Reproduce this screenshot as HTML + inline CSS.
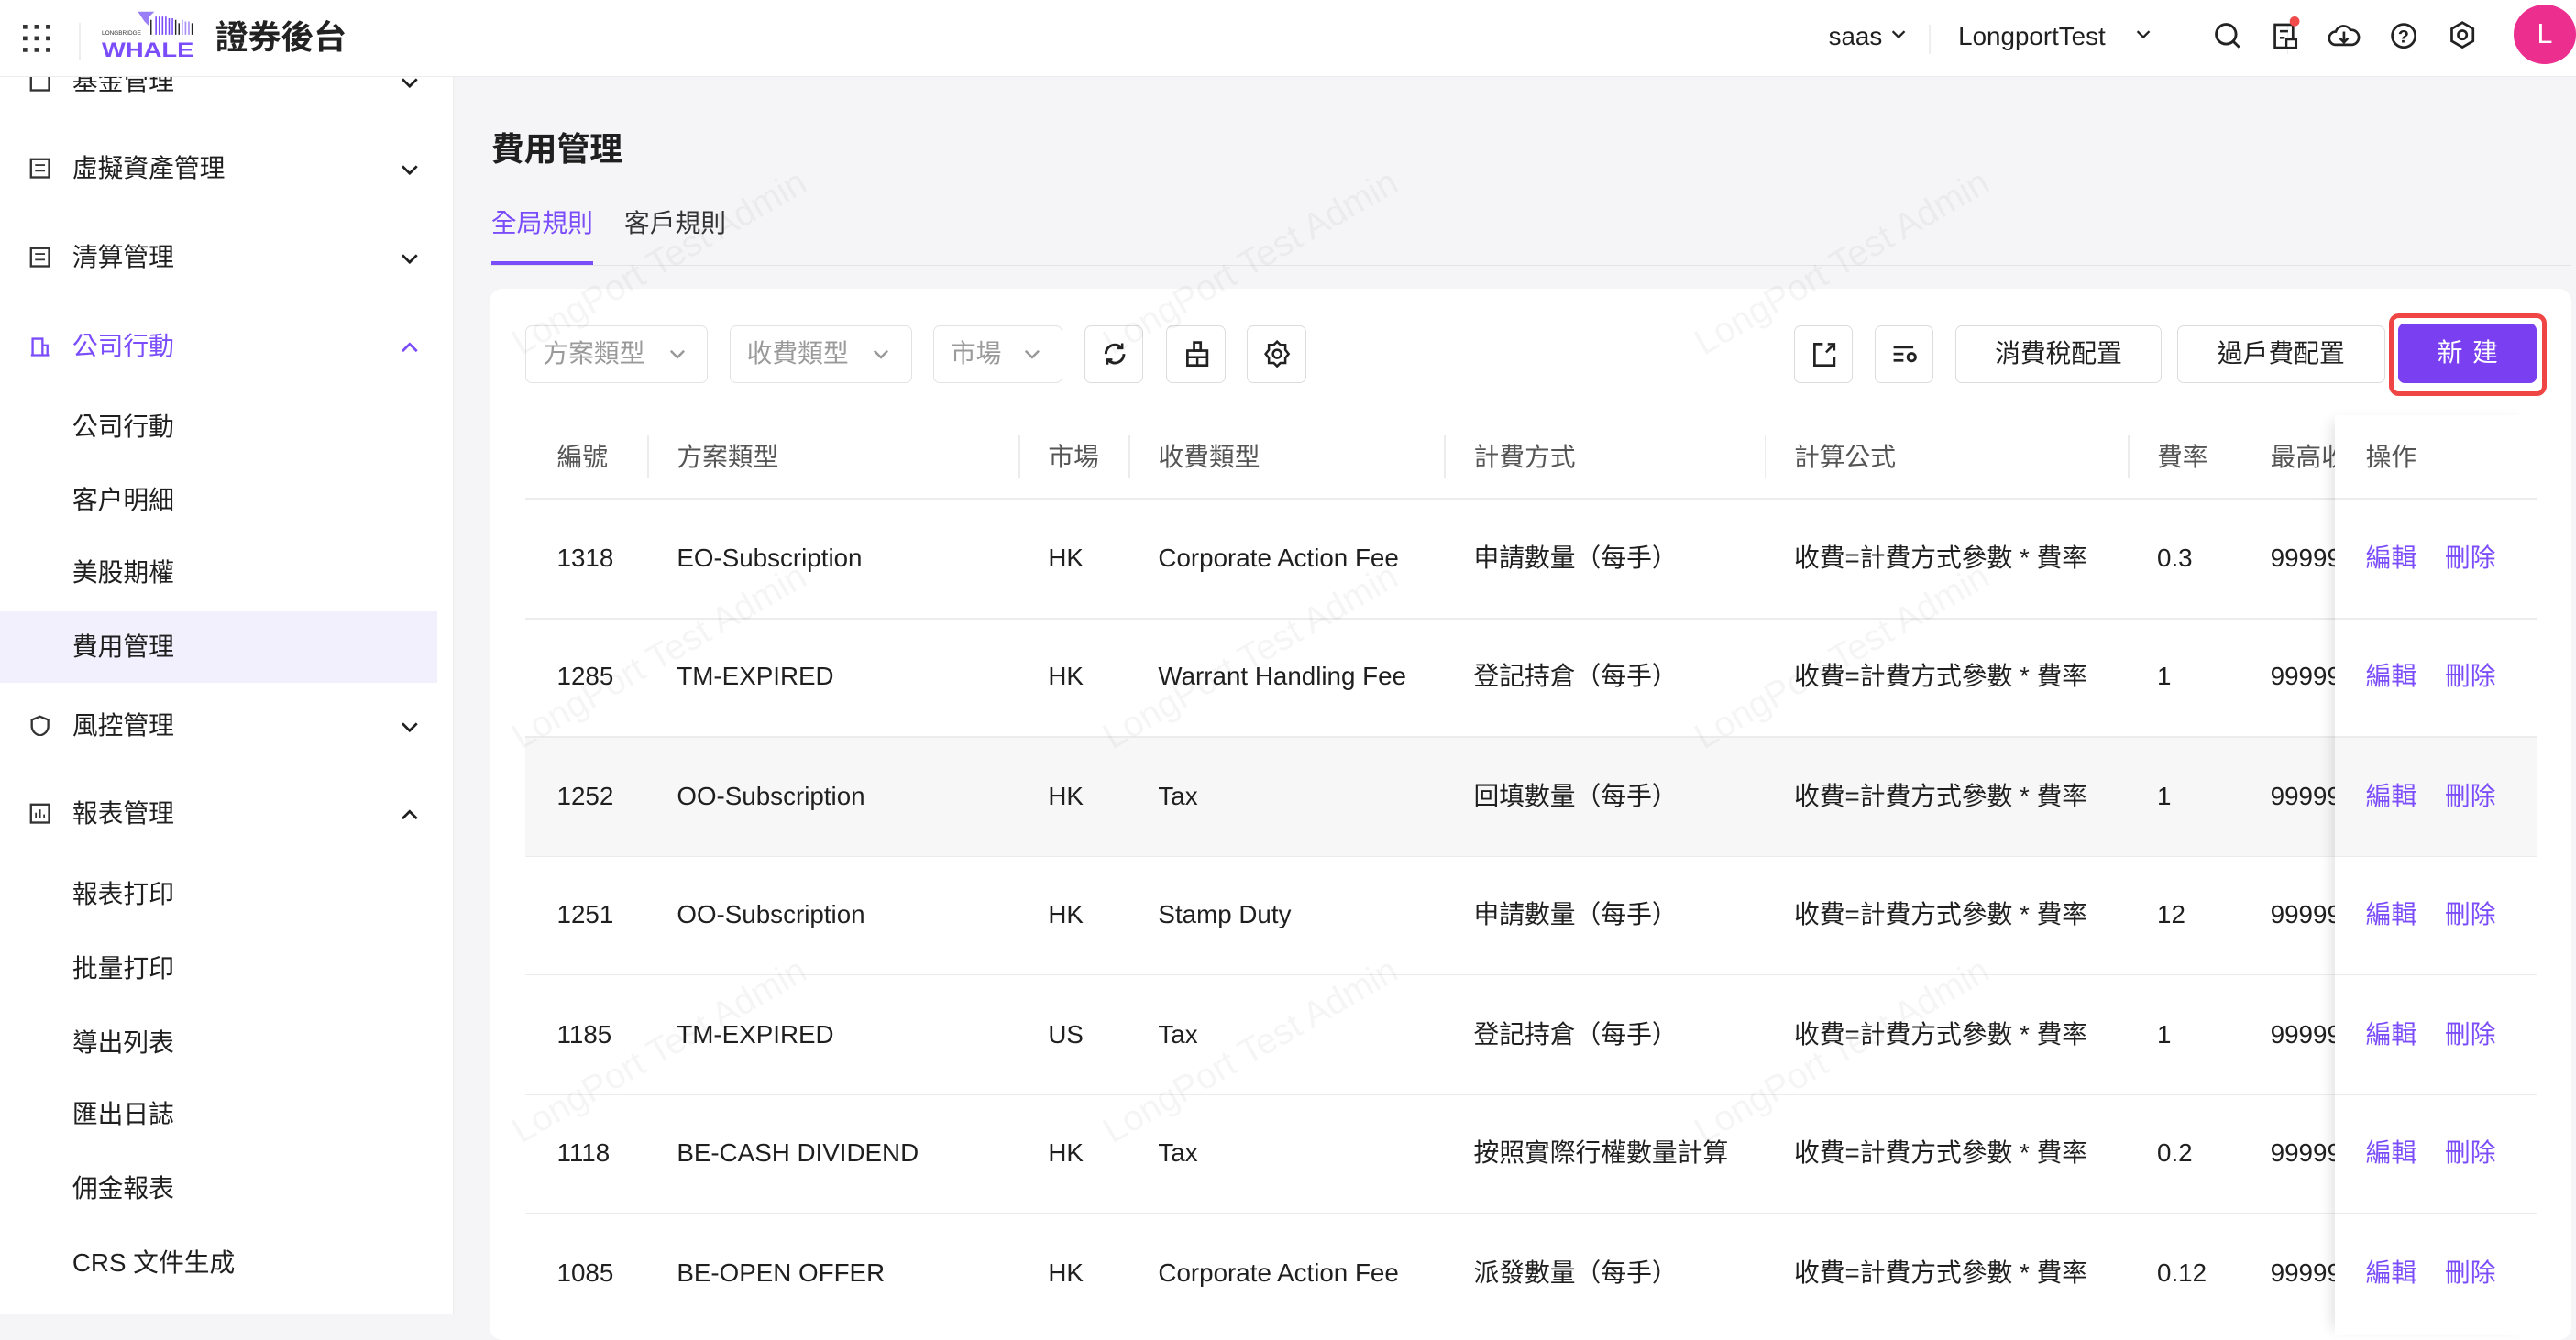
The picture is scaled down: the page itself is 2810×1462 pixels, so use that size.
<!DOCTYPE html>
<html><head><meta charset="utf-8">
<style>
html{zoom:1.7921}
*{box-sizing:border-box;margin:0;padding:0}
body{width:1568px;height:800px;overflow:hidden;background:#f5f5f7;font-family:"Liberation Sans","Noto Sans CJK TC",sans-serif;color:#1f1f1f;position:relative;font-size:15px;line-height:20px}
.abs{position:absolute}
.hdr{left:0;top:0;width:1568px;height:47px;background:#fff;border-bottom:1px solid #ececec;z-index:5}
.side{left:0;top:47px;width:276px;height:753px;background:#fff;border-right:1px solid #ececec}
.mi{position:absolute;left:0;width:266px;height:44px;line-height:44px;font-size:15.5px}
.mi .t{position:absolute;left:44px}
.mi .ic{position:absolute;left:18px;top:15px;width:13px;height:13px}
.mi .ch{position:absolute;left:244px;top:19px}
.sel{background:#f3f0fd}
.card{left:298px;top:176px;width:1267px;height:640px;background:#fff;border-radius:8px}
.sl{position:absolute;top:198px;height:35px;border:1px solid #e3e3e3;border-radius:4px;color:#9a9a9a;font-size:15.5px;line-height:33px;padding-left:10px;background:#fff}
.sl svg{position:absolute;right:13px;top:14px}
.ib{position:absolute;top:198px;width:36px;height:35px;border:1px solid #dcdcdc;border-radius:4px;background:#fff}
.ib svg{position:absolute;left:9px;top:8px}
.bt{position:absolute;top:198px;height:35px;border:1px solid #dcdcdc;border-radius:4px;background:#fff;text-align:center;line-height:33px;font-size:15.5px}
.th{position:absolute;top:253px;height:51px;line-height:51px;color:#555;font-size:15.5px}
.td{position:absolute;font-size:15.5px;color:#1f1f1f;white-space:nowrap;line-height:20px;height:20px}
.sep{position:absolute;top:265px;width:1px;height:26px;background:#ececec}
.rl{position:absolute;left:320px;width:1224px;height:1px;background:#ececec}
.wm{position:absolute;color:rgba(0,0,0,0.04);font-size:22px;transform:rotate(-30deg);white-space:nowrap;z-index:4;pointer-events:none}
a{color:#7b4dfa;text-decoration:none}
</style></head><body>
<svg width="0" height="0" style="position:absolute"><defs>
<symbol id="dn" viewBox="0 0 10 6"><path d="M1 1l4 4 4-4" fill="none" stroke="currentColor" stroke-width="1.4"/></symbol>
<symbol id="up" viewBox="0 0 10 6"><path d="M1 5l4-4 4 4" fill="none" stroke="currentColor" stroke-width="1.4"/></symbol>
</defs></svg>
<div class="abs hdr">
  <svg class="abs" style="left:14px;top:15px" width="18" height="18"><g fill="#333"><rect x="0" y="0" width="2.6" height="2.6"/><rect x="7" y="0" width="2.6" height="2.6"/><rect x="14" y="0" width="2.6" height="2.6"/><rect x="0" y="7" width="2.6" height="2.6"/><rect x="7" y="7" width="2.6" height="2.6"/><rect x="14" y="7" width="2.6" height="2.6"/><rect x="0" y="14" width="2.6" height="2.6"/><rect x="7" y="14" width="2.6" height="2.6"/><rect x="14" y="14" width="2.6" height="2.6"/></g></svg>
  <div class="abs" style="left:48px;top:14px;width:1px;height:22px;background:#eee"></div>
  <svg class="abs" style="left:62px;top:6px" width="58" height="30">
    <path d="M22 1h10l-3 3v6l-3-3z" fill="#9a7ef5"/>
    <g stroke="#7b4dfa" stroke-width="0.9"><line x1="33" y1="4" x2="33" y2="15"/><line x1="35" y1="4" x2="35" y2="15"/><line x1="37" y1="4" x2="37" y2="15"/><line x1="39" y1="4" x2="39" y2="15"/><line x1="41" y1="5" x2="41" y2="15"/><line x1="43" y1="5" x2="43" y2="15"/></g>
    <g stroke="#222" stroke-width="0.8"><line x1="30" y1="6" x2="30" y2="15"/><line x1="45" y1="6" x2="45" y2="15"/><line x1="47" y1="8" x2="47" y2="15"/><line x1="55" y1="8" x2="55" y2="15"/></g>
    <g stroke="#a98cf8" stroke-width="0.9"><line x1="49" y1="6" x2="49" y2="15"/><line x1="51" y1="7" x2="51" y2="15"/><line x1="53" y1="7" x2="53" y2="15"/></g>
    <text x="0" y="15" font-size="3.6" fill="#333" font-family="Liberation Sans">LONGBRIDGE</text>
    <text x="0" y="28.5" font-size="12.5" font-weight="bold" fill="#7b4dfa" font-family="Liberation Sans" textLength="56" lengthAdjust="spacingAndGlyphs">WHALE</text>
  </svg>
  <div class="abs" style="left:131px;top:10px;font-size:20px;font-weight:bold;color:#222;line-height:26px">證券後台</div>
  <div class="abs" style="left:1113px;top:12px;font-size:15.5px">saas</div>
  <svg class="abs" style="left:1151px;top:18px;color:#222" width="9" height="6"><use href="#dn"/></svg>
  <div class="abs" style="left:1174px;top:15px;width:1px;height:18px;background:#eee"></div>
  <div class="abs" style="left:1192px;top:12px;font-size:15.5px">LongportTest</div>
  <svg class="abs" style="left:1300px;top:18px;color:#222" width="9" height="6"><use href="#dn"/></svg>
  <div class="abs" style="left:1392px;top:15px;width:1px;height:18px;background:#eee"></div>
  <svg class="abs" style="left:1347px;top:13px" width="20" height="20"><circle cx="8" cy="8" r="6" fill="none" stroke="#222" stroke-width="1.6"/><line x1="12.5" y1="12.5" x2="16" y2="16" stroke="#222" stroke-width="1.6"/></svg>
  <svg class="abs" style="left:1383px;top:10px" width="20" height="22"><rect x="2" y="5" width="11" height="14" fill="none" stroke="#222" stroke-width="1.5"/><line x1="5" y1="9" x2="10" y2="9" stroke="#222" stroke-width="1.4"/><line x1="5" y1="13" x2="8" y2="13" stroke="#222" stroke-width="1.4"/><rect x="9" y="14" width="6" height="5" fill="#fff" stroke="#222" stroke-width="1.3"/><circle cx="14" cy="3" r="3" fill="#f04a4a"/></svg>
  <svg class="abs" style="left:1417px;top:12px" width="20" height="20"><path d="M5 15a4 4 0 0 1 0-8 5 5 0 0 1 9-1 4.5 4.5 0 0 1 1 9z" fill="none" stroke="#222" stroke-width="1.5"/><line x1="10" y1="7" x2="10" y2="13" stroke="#222" stroke-width="1.5"/><path d="M7.5 11l2.5 2.5 2.5-2.5" fill="none" stroke="#222" stroke-width="1.5"/></svg>
  <svg class="abs" style="left:1454px;top:13px" width="20" height="20"><circle cx="9" cy="9" r="7" fill="none" stroke="#222" stroke-width="1.5"/><text x="5.5" y="13" font-size="11" font-weight="bold" fill="#222" font-family="Liberation Sans">?</text></svg>
  <svg class="abs" style="left:1490px;top:12px" width="20" height="20"><path d="M9 1.5l6.5 3.75v7.5L9 16.5l-6.5-3.75v-7.5z" fill="none" stroke="#222" stroke-width="1.5"/><circle cx="9" cy="9" r="2.6" fill="none" stroke="#222" stroke-width="1.5"/></svg>
  <div class="abs" style="left:1530px;top:3px;width:38px;height:36px;border-radius:50%;background:#ec2f8f;color:#fff;font-size:17px;text-align:center;line-height:36px">L</div>
</div>

<div class="abs side">
  <div class="mi" style="top:-19px"><svg class="ic" viewBox="0 0 13 13"><rect x="1" y="1" width="11" height="11" fill="none" stroke="#333" stroke-width="1.3"/></svg><span class="t">基金管理</span><svg class="ch" width="11" height="7"><use href="#dn"/></svg></div>
  <div class="mi" style="top:34px"><svg class="ic" viewBox="0 0 13 13"><rect x="1" y="1" width="11" height="11" fill="none" stroke="#333" stroke-width="1.3"/><line x1="3.5" y1="4.5" x2="9.5" y2="4.5" stroke="#333"/><line x1="3.5" y1="8" x2="9.5" y2="8" stroke="#333"/></svg><span class="t">虛擬資產管理</span><svg class="ch" width="11" height="7"><use href="#dn"/></svg></div>
  <div class="mi" style="top:88px"><svg class="ic" viewBox="0 0 13 13"><rect x="1" y="1" width="11" height="11" fill="none" stroke="#333" stroke-width="1.3"/><line x1="3.5" y1="4.5" x2="9.5" y2="4.5" stroke="#333"/><line x1="3.5" y1="8" x2="9.5" y2="8" stroke="#333"/></svg><span class="t">清算管理</span><svg class="ch" width="11" height="7"><use href="#dn"/></svg></div>
  <div class="mi" style="top:142px;color:#7b4dfa"><svg class="ic" viewBox="0 0 13 13"><path d="M1 12h11M2 12V2h6v10M8 6h3v6" fill="none" stroke="#7b4dfa" stroke-width="1.3"/></svg><span class="t">公司行動</span><svg class="ch" width="11" height="7"><use href="#up"/></svg></div>
  <div class="mi" style="top:191px"><span class="t">公司行動</span></div>
  <div class="mi" style="top:236px"><span class="t">客户明細</span></div>
  <div class="mi" style="top:280px"><span class="t">美股期權</span></div>
  <div class="mi sel" style="top:325px"><span class="t">費用管理</span></div>
  <div class="mi" style="top:373px"><svg class="ic" viewBox="0 0 13 13"><path d="M6.5 1l5 2v4c0 3-2.5 5-5 5.5C4 12 1.5 10 1.5 7V3z" fill="none" stroke="#333" stroke-width="1.3"/></svg><span class="t">風控管理</span><svg class="ch" width="11" height="7"><use href="#dn"/></svg></div>
  <div class="mi" style="top:427px"><svg class="ic" viewBox="0 0 13 13"><rect x="1" y="1" width="11" height="11" fill="none" stroke="#333" stroke-width="1.3"/><line x1="4" y1="9" x2="4" y2="6" stroke="#333"/><line x1="6.5" y1="9" x2="6.5" y2="4" stroke="#333"/><line x1="9" y1="9" x2="9" y2="7" stroke="#333"/></svg><span class="t">報表管理</span><svg class="ch" width="11" height="7"><use href="#up"/></svg></div>
  <div class="mi" style="top:476px"><span class="t">報表打印</span></div>
  <div class="mi" style="top:521px"><span class="t">批量打印</span></div>
  <div class="mi" style="top:566px"><span class="t">導出列表</span></div>
  <div class="mi" style="top:610px"><span class="t">匯出日誌</span></div>
  <div class="mi" style="top:655px"><span class="t">佣金報表</span></div>
  <div class="mi" style="top:700px"><span class="t">CRS 文件生成</span></div>
</div>

<div class="abs" style="left:299px;top:78px;font-size:20px;font-weight:bold;line-height:26px">費用管理</div>
<div class="abs" style="left:299px;top:126px;font-size:15.5px;color:#7b4dfa">全局規則</div>
<div class="abs" style="left:380px;top:126px;font-size:15.5px;color:#333">客戶規則</div>
<div class="abs" style="left:298px;top:161px;width:1267px;height:1px;background:#e3e3e3"></div>
<div class="abs" style="left:299px;top:159px;width:62px;height:2px;background:#7b4dfa"></div>

<div class="abs card"></div>
<div class="sl" style="left:320px;width:111px">方案類型<svg width="10" height="6" style="color:#999"><use href="#dn"/></svg></div>
<div class="sl" style="left:444px;width:111px">收費類型<svg width="10" height="6" style="color:#999"><use href="#dn"/></svg></div>
<div class="sl" style="left:568px;width:79px">市場<svg width="10" height="6" style="color:#999"><use href="#dn"/></svg></div>
<div class="ib" style="left:660px"><svg width="18" height="18"><path d="M3.5 9a5.5 5.5 0 0 1 9.5-3.8M14.5 9a5.5 5.5 0 0 1-9.5 3.8" fill="none" stroke="#222" stroke-width="1.6"/><path d="M13.5 2.5v3h-3M4.5 15.5v-3h3" fill="none" stroke="#222" stroke-width="1.4"/></svg></div>
<div class="ib" style="left:710px"><svg width="18" height="18"><rect x="3" y="7" width="12" height="9" fill="none" stroke="#222" stroke-width="1.5"/><rect x="7" y="2" width="4" height="5" fill="none" stroke="#222" stroke-width="1.5"/><line x1="3" y1="11" x2="15" y2="11" stroke="#222" stroke-width="1.4"/><line x1="9" y1="11" x2="9" y2="16" stroke="#222" stroke-width="1.4"/></svg></div>
<div class="ib" style="left:759px"><svg width="18" height="18"><path d="M9 1.5l2 2h3v3l2 2.5-2 2.5v3h-3l-2 2-2-2H4v-3L2 9l2-2.5v-3h3z" fill="none" stroke="#222" stroke-width="1.4"/><circle cx="9" cy="9" r="2.5" fill="none" stroke="#222" stroke-width="1.4"/></svg></div>
<div class="ib" style="left:1092px"><svg width="18" height="18"><path d="M8 3H3v13h12v-5" fill="none" stroke="#222" stroke-width="1.5"/><path d="M10 8l5-5M11 3h4v4" fill="none" stroke="#222" stroke-width="1.4"/></svg></div>
<div class="ib" style="left:1141px"><svg width="18" height="18"><line x1="2" y1="5" x2="14" y2="5" stroke="#222" stroke-width="1.5"/><line x1="2" y1="9" x2="8" y2="9" stroke="#222" stroke-width="1.5"/><line x1="2" y1="13" x2="8" y2="13" stroke="#222" stroke-width="1.5"/><circle cx="13" cy="11" r="2.3" fill="none" stroke="#222" stroke-width="1.6"/></svg></div>
<div class="bt" style="left:1190px;width:126px">消費稅配置</div>
<div class="bt" style="left:1325px;width:127px">過戶費配置</div>
<div class="abs" style="left:1454px;top:191px;width:96px;height:50px;border:3px solid #f04545;border-radius:6px"></div>
<div class="abs" style="left:1460px;top:197px;width:84px;height:36px;border-radius:4px;background:#7b3ff2;color:#fff;font-size:15.5px;text-align:center;line-height:36px;letter-spacing:6px;padding-left:6px">新建</div>

<div class="th" style="left:339px">編號</div>
<div class="th" style="left:412px">方案類型</div>
<div class="th" style="left:638px">市場</div>
<div class="th" style="left:705px">收費類型</div>
<div class="th" style="left:897px">計費方式</div>
<div class="th" style="left:1092px">計算公式</div>
<div class="th" style="left:1313px">費率</div>
<div class="th" style="left:1382px">最高收</div>
<div class="sep" style="left:394px"></div><div class="sep" style="left:620px"></div><div class="sep" style="left:687px"></div><div class="sep" style="left:879px"></div><div class="sep" style="left:1074px"></div><div class="sep" style="left:1295px"></div><div class="sep" style="left:1363px"></div>
<div class="rl" style="top:303px"></div>
<div class="abs" style="left:320px;top:449px;width:1224px;height:72px;background:#f7f7f7"></div>
<div class="rl" style="top:376px"></div><div class="rl" style="top:448px"></div><div class="rl" style="top:521px"></div><div class="rl" style="top:593px"></div><div class="rl" style="top:666px"></div><div class="rl" style="top:738px"></div>

<div class="abs" style="left:1421px;top:253px;width:123px;height:560px;background:#fff;box-shadow:-6px 0 8px -4px rgba(0,0,0,0.12)"></div>
<div class="abs" style="left:1421px;top:449px;width:123px;height:72px;background:#f7f7f7"></div>
<div class="abs" style="left:1421px;top:303px;width:123px;height:1px;background:#ececec"></div>
<div class="abs" style="left:1421px;top:376px;width:123px;height:1px;background:#ececec"></div><div class="abs" style="left:1421px;top:448px;width:123px;height:1px;background:#ececec"></div><div class="abs" style="left:1421px;top:521px;width:123px;height:1px;background:#ececec"></div><div class="abs" style="left:1421px;top:593px;width:123px;height:1px;background:#ececec"></div><div class="abs" style="left:1421px;top:666px;width:123px;height:1px;background:#ececec"></div><div class="abs" style="left:1421px;top:738px;width:123px;height:1px;background:#ececec"></div>
<div class="th" style="left:1440px">操作</div>

<div class="td" style="left:339px;top:330px">1318</div><div class="td" style="left:412px;top:330px">EO-Subscription</div><div class="td" style="left:638px;top:330px">HK</div><div class="td" style="left:705px;top:330px">Corporate Action Fee</div><div class="td" style="left:897px;top:330px">申請數量（每手）</div><div class="td" style="left:1092px;top:330px">收費=計費方式參數 * 費率</div><div class="td" style="left:1313px;top:330px">0.3</div><div class="td" style="left:1382px;top:330px;width:39px;overflow:hidden">99999</div><div class="td" style="left:1440px;top:330px"><a>編輯</a>&nbsp;&nbsp;&nbsp;&nbsp;<a>刪除</a></div>
<div class="td" style="left:339px;top:402px">1285</div><div class="td" style="left:412px;top:402px">TM-EXPIRED</div><div class="td" style="left:638px;top:402px">HK</div><div class="td" style="left:705px;top:402px">Warrant Handling Fee</div><div class="td" style="left:897px;top:402px">登記持倉（每手）</div><div class="td" style="left:1092px;top:402px">收費=計費方式參數 * 費率</div><div class="td" style="left:1313px;top:402px">1</div><div class="td" style="left:1382px;top:402px;width:39px;overflow:hidden">99999</div><div class="td" style="left:1440px;top:402px"><a>編輯</a>&nbsp;&nbsp;&nbsp;&nbsp;<a>刪除</a></div>
<div class="td" style="left:339px;top:475px">1252</div><div class="td" style="left:412px;top:475px">OO-Subscription</div><div class="td" style="left:638px;top:475px">HK</div><div class="td" style="left:705px;top:475px">Tax</div><div class="td" style="left:897px;top:475px">回填數量（每手）</div><div class="td" style="left:1092px;top:475px">收費=計費方式參數 * 費率</div><div class="td" style="left:1313px;top:475px">1</div><div class="td" style="left:1382px;top:475px;width:39px;overflow:hidden">99999</div><div class="td" style="left:1440px;top:475px"><a>編輯</a>&nbsp;&nbsp;&nbsp;&nbsp;<a>刪除</a></div>
<div class="td" style="left:339px;top:547px">1251</div><div class="td" style="left:412px;top:547px">OO-Subscription</div><div class="td" style="left:638px;top:547px">HK</div><div class="td" style="left:705px;top:547px">Stamp Duty</div><div class="td" style="left:897px;top:547px">申請數量（每手）</div><div class="td" style="left:1092px;top:547px">收費=計費方式參數 * 費率</div><div class="td" style="left:1313px;top:547px">12</div><div class="td" style="left:1382px;top:547px;width:39px;overflow:hidden">99999</div><div class="td" style="left:1440px;top:547px"><a>編輯</a>&nbsp;&nbsp;&nbsp;&nbsp;<a>刪除</a></div>
<div class="td" style="left:339px;top:620px">1185</div><div class="td" style="left:412px;top:620px">TM-EXPIRED</div><div class="td" style="left:638px;top:620px">US</div><div class="td" style="left:705px;top:620px">Tax</div><div class="td" style="left:897px;top:620px">登記持倉（每手）</div><div class="td" style="left:1092px;top:620px">收費=計費方式參數 * 費率</div><div class="td" style="left:1313px;top:620px">1</div><div class="td" style="left:1382px;top:620px;width:39px;overflow:hidden">99999</div><div class="td" style="left:1440px;top:620px"><a>編輯</a>&nbsp;&nbsp;&nbsp;&nbsp;<a>刪除</a></div>
<div class="td" style="left:339px;top:692px">1118</div><div class="td" style="left:412px;top:692px">BE-CASH DIVIDEND</div><div class="td" style="left:638px;top:692px">HK</div><div class="td" style="left:705px;top:692px">Tax</div><div class="td" style="left:897px;top:692px">按照實際行權數量計算</div><div class="td" style="left:1092px;top:692px">收費=計費方式參數 * 費率</div><div class="td" style="left:1313px;top:692px">0.2</div><div class="td" style="left:1382px;top:692px;width:39px;overflow:hidden">99999</div><div class="td" style="left:1440px;top:692px"><a>編輯</a>&nbsp;&nbsp;&nbsp;&nbsp;<a>刪除</a></div>
<div class="td" style="left:339px;top:765px">1085</div><div class="td" style="left:412px;top:765px">BE-OPEN OFFER</div><div class="td" style="left:638px;top:765px">HK</div><div class="td" style="left:705px;top:765px">Corporate Action Fee</div><div class="td" style="left:897px;top:765px">派發數量（每手）</div><div class="td" style="left:1092px;top:765px">收費=計費方式參數 * 費率</div><div class="td" style="left:1313px;top:765px">0.12</div><div class="td" style="left:1382px;top:765px;width:39px;overflow:hidden">99999</div><div class="td" style="left:1440px;top:765px"><a>編輯</a>&nbsp;&nbsp;&nbsp;&nbsp;<a>刪除</a></div>

<div class="wm" style="left:300px;top:150px">LongPort Test Admin</div>
<div class="wm" style="left:660px;top:150px">LongPort Test Admin</div>
<div class="wm" style="left:1020px;top:150px">LongPort Test Admin</div>
<div class="wm" style="left:300px;top:390px">LongPort Test Admin</div>
<div class="wm" style="left:660px;top:390px">LongPort Test Admin</div>
<div class="wm" style="left:1020px;top:390px">LongPort Test Admin</div>
<div class="wm" style="left:300px;top:630px">LongPort Test Admin</div>
<div class="wm" style="left:660px;top:630px">LongPort Test Admin</div>
<div class="wm" style="left:1020px;top:630px">LongPort Test Admin</div>
</body></html>
